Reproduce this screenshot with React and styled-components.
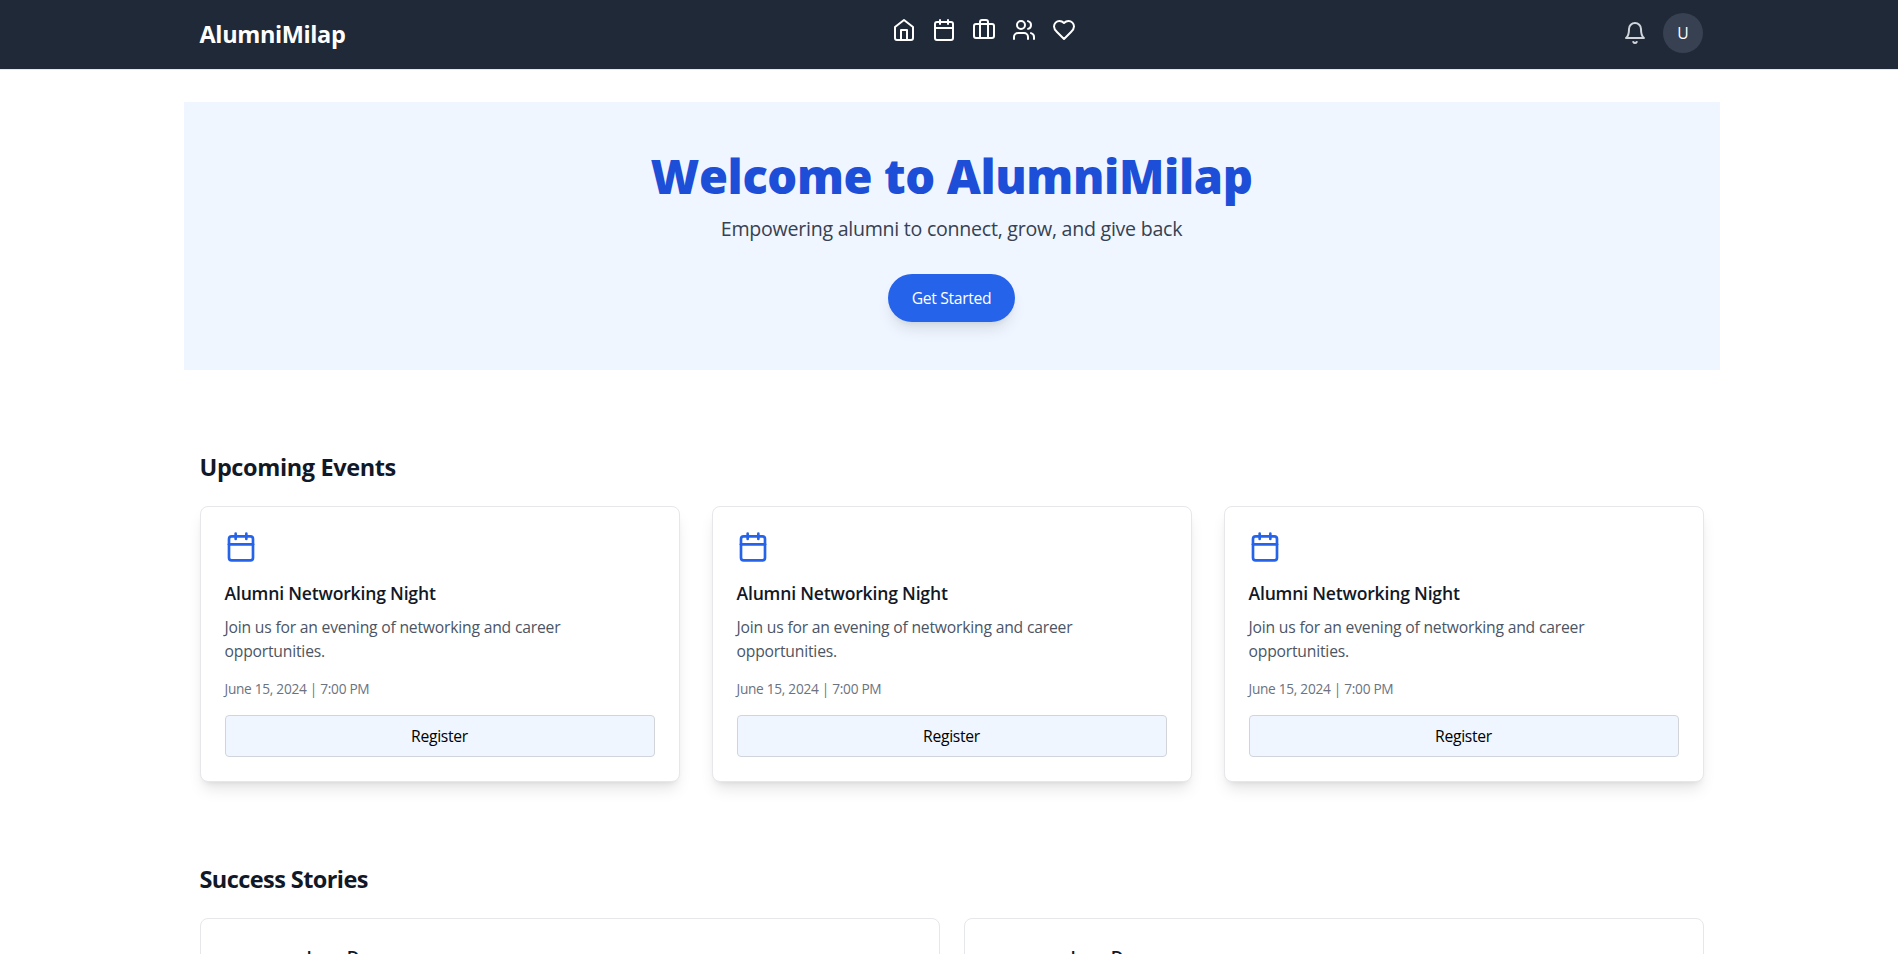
import React from "react";
import styled, { createGlobalStyle } from "styled-components";
import { Calendar, Briefcase, Users } from "lucide-react";

const GlobalStyle = createGlobalStyle`
  *, *::before, *::after { box-sizing: border-box; }
  html, body { margin: 0; height: 100%; overflow: hidden; background: #fff; }
  body { font-family: "Open Sans", "Noto Sans", sans-serif; font-size: 15.7px; line-height: 24px; color: #111827; }
  h1, h2, h3, p { margin: 0; }
  button { font: inherit; color: inherit; cursor: pointer; }
  svg { display: block; }
`;

const Page = styled.div`
  width: 1903px;
  height: 954px;
  overflow: hidden;
  background: #fff;
`;

const Header = styled.header`
  height: 70px;
  background: #1f2937;
  border-bottom: 1px solid #e5e7eb;
`;

const HeaderInner = styled.div`
  width: 1536px;
  height: 69px;
  margin: 0 auto;
  padding: 13px 16.5px 0 16px;
  display: flex;
  justify-content: space-between;
  align-items: flex-start;
  color: #fff;
`;

const Brand = styled.div`
  flex: 1;
  padding-top: 5px;
  font-size: 23.5px;
  line-height: 32px;
  font-weight: 700;
  letter-spacing: -0.38px;
`;

const Nav = styled.nav`
  display: flex;
  gap: 16px;
  padding-top: 5px;
  margin-left: 65.5px;
`;

const NavLink = styled.a`
  display: block;
  color: #fff;
`;

const Account = styled.div`
  flex: 1;
  display: flex;
  justify-content: flex-end;
  align-items: center;
  gap: 16px;
  color: #d1d5db;
`;

const Avatar = styled.div`
  width: 40px;
  height: 40px;
  border-radius: 50%;
  background: #374151;
  color: #fff;
  display: flex;
  align-items: center;
  justify-content: center;
`;

const Main = styled.main`
  width: 1536px;
  margin: 0 auto;
  padding-top: 32px;
`;

const Hero = styled.section`
  height: 268px;
  padding-top: 48px;
  background: #eff6ff;
  display: flex;
  flex-direction: column;
  align-items: center;
`;

const HeroTitle = styled.h1`
  font-size: 47px;
  line-height: 52px;
  font-weight: 800;
  letter-spacing: -0.38px;
  color: #1d4ed8;
`;

const HeroText = styled.p`
  margin-top: 13px;
  font-size: 19.6px;
  line-height: 28px;
  letter-spacing: -0.26px;
  color: #374151;
`;

const HeroButton = styled.button`
  margin-top: 31px;
  width: 127px;
  height: 48px;
  border: 0;
  padding: 0;
  border-radius: 24px;
  background: #2563eb;
  color: #fff;
  letter-spacing: -0.35px;
  box-shadow: 0 10px 15px -3px rgba(0, 0, 0, 0.1), 0 4px 6px -4px rgba(0, 0, 0, 0.1);
`;

const Section = styled.section`
  padding: 0 16px;
  margin-top: 81px;
`;

const SectionTitle = styled.h2`
  font-size: 23.5px;
  line-height: 32px;
  font-weight: 700;
  letter-spacing: ${(p) => p.$tracking}px;
`;

const Grid = styled.div`
  display: grid;
  grid-template-columns: repeat(${(p) => p.$columns}, 1fr);
  gap: ${(p) => p.$gap}px;
  margin-top: 23px;
`;

const Card = styled.article`
  height: 276px;
  padding: 24px;
  background: #fff;
  border: 1px solid #e5e7eb;
  border-radius: 8px;
  box-shadow: ${(p) => (p.$raised ? "0 10px 15px -3px rgba(0, 0, 0, 0.1), 0 4px 6px -4px rgba(0, 0, 0, 0.1)" : "none")};
`;

const CardTitle = styled.h3`
  margin-top: ${(p) => p.$top || 0}px;
  font-size: 17.6px;
  line-height: 28px;
  font-weight: 600;
  letter-spacing: -0.2px;
`;

const EventText = styled.p`
  margin-top: 8px;
  letter-spacing: -0.2px;
  color: #4b5563;
`;

const EventDate = styled.p`
  margin-top: 16px;
  font-size: 13.7px;
  line-height: 20px;
  letter-spacing: -0.29px;
  color: #6b7280;
`;

const RegisterButton = styled.button`
  display: block;
  width: 100%;
  height: 42px;
  margin-top: 16px;
  padding: 0;
  background: #eff6ff;
  border: 1px solid #d1d5db;
  border-radius: 4px;
  letter-spacing: -0.3px;
  color: #000;
`;

const Person = styled.div`
  display: flex;
  align-items: flex-start;
  gap: 18px;
`;

const Portrait = styled.div`
  width: 64px;
  height: 64px;
  border-radius: 50%;
`;

const Outline = ({ children }) => (
  <svg width="24" height="24" viewBox="0 0 24 24" fill="none" stroke="currentColor" strokeWidth="2" strokeLinecap="round" strokeLinejoin="round">
    {children}
  </svg>
);

const HomeIcon = () => (
  <Outline>
    <path d="m3 9 9-7 9 7v11a2 2 0 0 1-2 2H5a2 2 0 0 1-2-2z" />
    <polyline points="9 22 9 12 15 12 15 22" />
  </Outline>
);

const HeartIcon = () => (
  <Outline>
    <path d="M19 14c1.49-1.46 3-3.21 3-5.5A5.5 5.5 0 0 0 16.5 3c-1.76 0-3 .5-4.5 2-1.5-1.5-2.74-2-4.5-2A5.5 5.5 0 0 0 2 8.5c0 2.3 1.5 4.05 3 5.5l7 7Z" />
  </Outline>
);

const BellIcon = () => (
  <Outline>
    <path d="M6 8a6 6 0 0 1 12 0c0 7 3 9 3 9H3s3-2 3-9" />
    <path d="M10.3 21a1.94 1.94 0 0 0 3.4 0" />
  </Outline>
);

const navItems = [HomeIcon, Calendar, Briefcase, Users, HeartIcon];
const events = [1, 2, 3];
const stories = [1, 2];

export default function App() {
  return (
    <Page>
      <GlobalStyle />
      <Header>
        <HeaderInner>
          <Brand>AlumniMilap</Brand>
          <Nav>
            {navItems.map((Icon, i) => (
              <NavLink key={i}><Icon /></NavLink>
            ))}
          </Nav>
          <Account>
            <BellIcon />
            <Avatar>U</Avatar>
          </Account>
        </HeaderInner>
      </Header>
      <Main>
        <Hero>
          <HeroTitle>Welcome to AlumniMilap</HeroTitle>
          <HeroText>Empowering alumni to connect, grow, and give back</HeroText>
          <HeroButton>Get Started</HeroButton>
        </Hero>
        <Section>
          <SectionTitle $tracking={-0.38}>Upcoming Events</SectionTitle>
          <Grid $columns={3} $gap={32}>
            {events.map((id) => (
              <Card key={id} $raised>
                <Calendar size={32} color="#2563eb" />
                <CardTitle $top={16}>Alumni Networking Night</CardTitle>
                <EventText>Join us for an evening of networking and career opportunities.</EventText>
                <EventDate>June 15, 2024 | 7:00 PM</EventDate>
                <RegisterButton>Register</RegisterButton>
              </Card>
            ))}
          </Grid>
        </Section>
        <Section>
          <SectionTitle $tracking={-0.58}>Success Stories</SectionTitle>
          <Grid $columns={2} $gap={24}>
            {stories.map((id) => (
              <Card key={id}>
                <Person>
                  <Portrait />
                  <CardTitle>Jane Doe</CardTitle>
                </Person>
              </Card>
            ))}
          </Grid>
        </Section>
      </Main>
    </Page>
  );
}
